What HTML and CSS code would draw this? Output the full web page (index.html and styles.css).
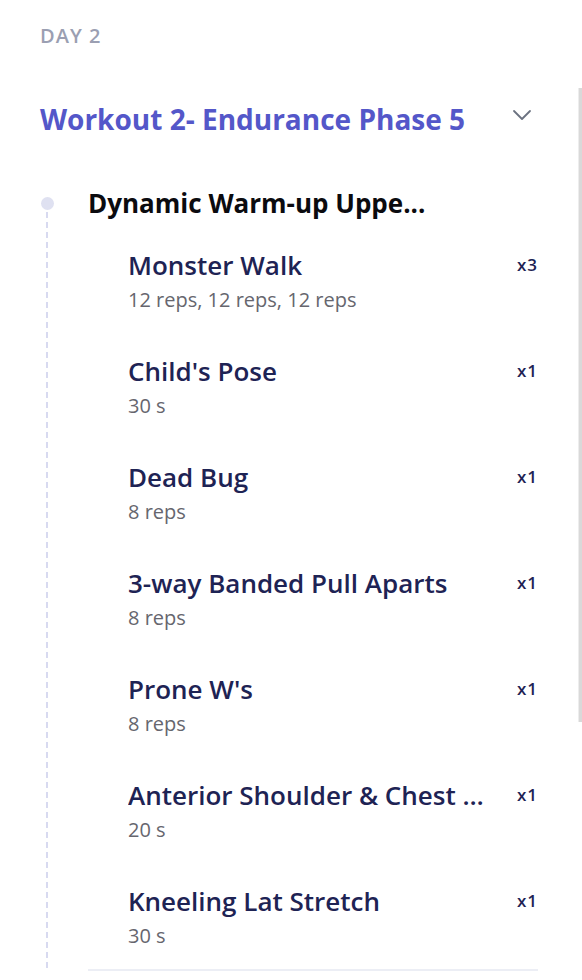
FILE: index.html
```html
<!DOCTYPE html>
<html lang="en">
<head>
<meta charset="utf-8">
<title>Workout</title>
<link rel="stylesheet" href="styles.css">
</head>
<body>
<div class="page">
  <div class="day-label">DAY 2</div>
  <div class="workout-header">
    <h1 class="workout-title">Workout 2- Endurance Phase 5</h1>
    <svg class="chevron" width="20" height="12" viewBox="0 0 20 12" aria-hidden="true">
      <path d="M2 2 L10 10 L18 2" fill="none" stroke="#6b7280" stroke-width="1.8" stroke-linecap="round" stroke-linejoin="round"/>
    </svg>
  </div>
  <div class="section">
    <div class="rail">
      <span class="dot"></span>
      <span class="line"></span>
    </div>
    <div class="content">
      <h2 class="section-title">Dynamic Warm-up Uppe...</h2>
      <ul class="exercises">
        <li class="exercise">
          <div class="info"><div class="name">Monster Walk</div><div class="detail">12 reps, 12 reps, 12 reps</div></div>
          <div class="sets">x3</div>
        </li>
        <li class="exercise">
          <div class="info"><div class="name">Child's Pose</div><div class="detail">30 s</div></div>
          <div class="sets">x1</div>
        </li>
        <li class="exercise">
          <div class="info"><div class="name">Dead Bug</div><div class="detail">8 reps</div></div>
          <div class="sets">x1</div>
        </li>
        <li class="exercise">
          <div class="info"><div class="name">3-way Banded Pull Aparts</div><div class="detail">8 reps</div></div>
          <div class="sets">x1</div>
        </li>
        <li class="exercise">
          <div class="info"><div class="name">Prone W's</div><div class="detail">8 reps</div></div>
          <div class="sets">x1</div>
        </li>
        <li class="exercise">
          <div class="info"><div class="name">Anterior Shoulder &amp; Chest Stretch</div><div class="detail">20 s</div></div>
          <div class="sets">x1</div>
        </li>
        <li class="exercise">
          <div class="info"><div class="name">Kneeling Lat Stretch</div><div class="detail">30 s</div></div>
          <div class="sets">x1</div>
        </li>
      </ul>
      <div class="divider"></div>
    </div>
  </div>
</div>
<div class="scrollbar"></div>
</body>
</html>
```
FILE: styles.css
```css
html, body {
  margin: 0;
  padding: 0;
  background: #ffffff;
}
body {
  font-family: "Open Sans", sans-serif;
  overflow: hidden;
  height: 980px;
}
.page {
  padding: 24px 44px 0 40px;
}
.day-label {
  font-size: 20px;
  line-height: 24px;
  font-weight: 600;
  color: #9b9fb2;
  letter-spacing: 1px;
}
.workout-header {
  display: flex;
  align-items: center;
  justify-content: space-between;
  margin-top: 54px;
}
.workout-title {
  margin: 0;
  font-size: 28px;
  line-height: 34px;
  font-weight: 700;
  color: #5457c9;
}
.chevron {
  margin-right: 6px;
  margin-top: -8px;
}
.section {
  display: flex;
  margin-top: 50px;
}
.rail {
  width: 12px;
  margin-left: 1px;
  display: flex;
  flex-direction: column;
  align-items: center;
  padding-top: 11px;
}
.dot {
  width: 13px;
  height: 13px;
  border-radius: 50%;
  background: #dfe1f1;
  flex: none;
}
.line {
  flex: 1;
  width: 2px;
  margin-top: 2px;
  background: repeating-linear-gradient(to bottom, #d8daf0 0 6px, transparent 6px 10px);
}
.content {
  flex: 1;
  margin-left: 35px;
  min-width: 0;
}
.section-title {
  margin: 0;
  font-size: 26px;
  line-height: 34px;
  font-weight: 700;
  color: #0b0b0f;
}
.exercises {
  list-style: none;
  margin: 27px 0 0;
  padding: 0 0 0 40px;
  display: flex;
  flex-direction: column;
  gap: 41px;
}
.exercise {
  display: flex;
  align-items: flex-start;
  gap: 30px;
}
.info {
  flex: 1;
  min-width: 0;
}
.name {
  font-size: 26px;
  line-height: 36px;
  font-weight: 600;
  color: #1e2354;
  white-space: nowrap;
  overflow: hidden;
  text-overflow: ellipsis;
}
.detail {
  margin-top: 5px;
  font-size: 20px;
  line-height: 24px;
  color: #66666e;
}
.sets {
  font-size: 17px;
  line-height: 36px;
  font-weight: 600;
  color: #1e2354;
  letter-spacing: 1px;
}
.divider {
  height: 2px;
  background: #eceef5;
  margin-top: 21px;
}
.scrollbar {
  position: absolute;
  top: 88px;
  right: 0;
  width: 3px;
  height: 634px;
  background: #d9d9d9;
  border-left: 1px solid #ededed;
}
```
